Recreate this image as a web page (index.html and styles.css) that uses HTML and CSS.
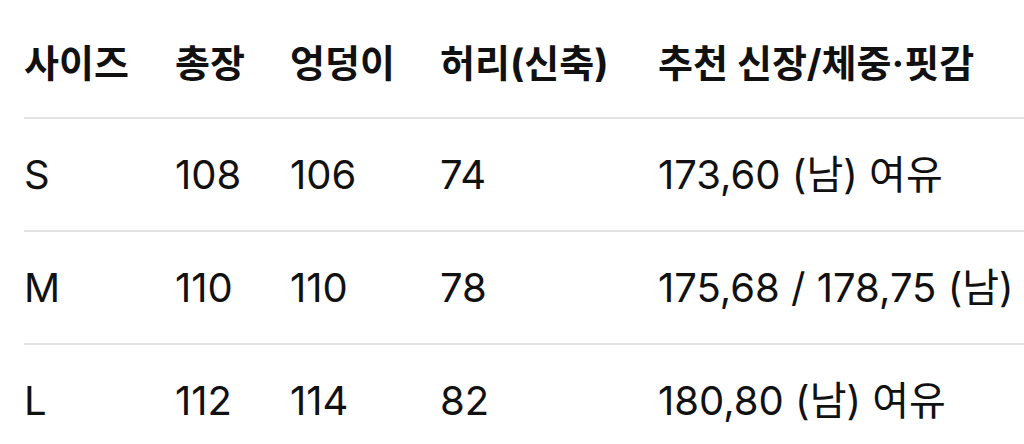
FILE: index.html
```html
<!DOCTYPE html>
<html lang="ko">
<head>
<meta charset="utf-8">
<title>사이즈</title>
<link rel="stylesheet" href="styles.css">
</head>
<body>
<div class="size-table">
  <div class="row head">
    <div class="cell">사이즈</div>
    <div class="cell">총장</div>
    <div class="cell">엉덩이</div>
    <div class="cell">허리(신축)</div>
    <div class="cell">추천 신장/체중·핏감</div>
  </div>
  <div class="row">
    <div class="cell">S</div>
    <div class="cell">108</div>
    <div class="cell">106</div>
    <div class="cell">74</div>
    <div class="cell">173,60 (남) 여유</div>
  </div>
  <div class="row">
    <div class="cell">M</div>
    <div class="cell">110</div>
    <div class="cell">110</div>
    <div class="cell">78</div>
    <div class="cell">175,68 / 178,75 (남)</div>
  </div>
  <div class="row">
    <div class="cell">L</div>
    <div class="cell">112</div>
    <div class="cell">114</div>
    <div class="cell">82</div>
    <div class="cell">180,80 (남) 여유</div>
  </div>
</div>
</body>
</html>
```

FILE: styles.css
```css
html, body {
  margin: 0;
  padding: 0;
  background: #ffffff;
  overflow: hidden;
}

body {
  font-family: Inter, "Noto Sans CJK KR", sans-serif;
  color: #111111;
  font-size: 40px;
}

.size-table {
  margin-left: 24px;
  padding-top: 10px;
}

.row {
  display: grid;
  grid-template-columns: 151px 115px 150px 218px 1fr;
  align-items: center;
  height: 111px;
  border-bottom: 2px solid #e3e3e3;
}

.row:last-child {
  border-bottom: none;
}

.row.head {
  height: 107px;
  font-size: 38px;
  font-weight: 700;
}

.cell {
  white-space: nowrap;
  line-height: 1.2;
}
```
